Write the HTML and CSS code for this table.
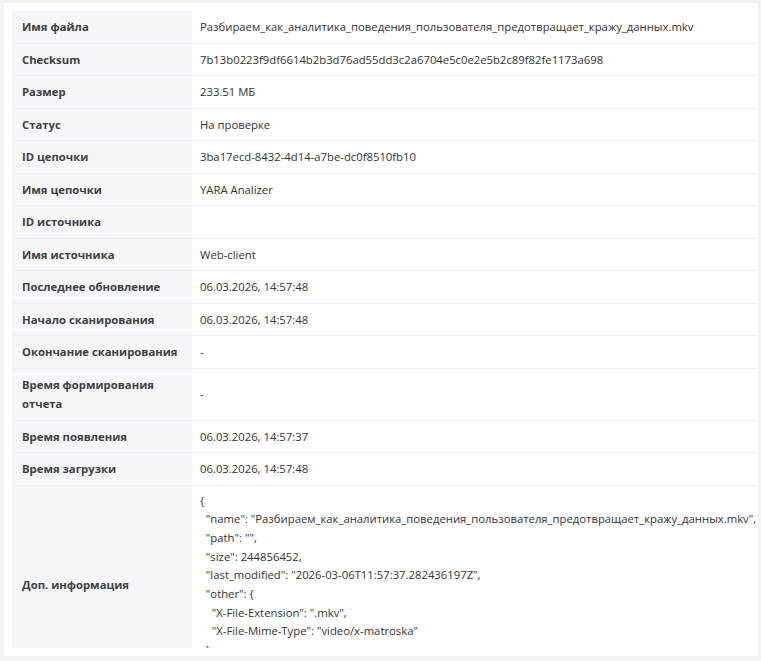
FILE: index.html
```html
<!DOCTYPE html>
<html lang="ru">

<head>
    <meta charset="UTF-8">
    <meta name="viewport" content="width=device-width, initial-scale=1.0">
    <title>Детали файла</title>
    <link rel="stylesheet" href="styles.css">
</head>

<body>
    <div class="card">
        <div class="scroll">
            <table class="info">
                <tbody>
                    <tr>
                        <th>Имя файла</th>
                        <td>Разбираем_как_аналитика_поведения_пользователя_предотвращает_кражу_данных.mkv</td>
                    </tr>
                    <tr>
                        <th>Checksum</th>
                        <td>7b13b0223f9df6614b2b3d76ad55dd3c2a6704e5c0e2e5b2c89f82fe1173a698</td>
                    </tr>
                    <tr>
                        <th>Размер</th>
                        <td>233.51 МБ</td>
                    </tr>
                    <tr>
                        <th>Статус</th>
                        <td>На проверке</td>
                    </tr>
                    <tr>
                        <th>ID цепочки</th>
                        <td>3ba17ecd-8432-4d14-a7be-dc0f8510fb10</td>
                    </tr>
                    <tr>
                        <th>Имя цепочки</th>
                        <td>YARA Analizer</td>
                    </tr>
                    <tr>
                        <th>ID источника</th>
                        <td></td>
                    </tr>
                    <tr>
                        <th>Имя источника</th>
                        <td>Web-client</td>
                    </tr>
                    <tr>
                        <th>Последнее обновление</th>
                        <td>06.03.2026, 14:57:48</td>
                    </tr>
                    <tr>
                        <th>Начало сканирования</th>
                        <td>06.03.2026, 14:57:48</td>
                    </tr>
                    <tr>
                        <th>Окончание сканирования</th>
                        <td>-</td>
                    </tr>
                    <tr>
                        <th>Время формирования отчета</th>
                        <td>-</td>
                    </tr>
                    <tr>
                        <th>Время появления</th>
                        <td>06.03.2026, 14:57:37</td>
                    </tr>
                    <tr>
                        <th>Время загрузки</th>
                        <td>06.03.2026, 14:57:48</td>
                    </tr>
                    <tr>
                        <th>Доп. информация</th>
                        <td class="json-cell"><pre class="json">{
  "name": "Разбираем_как_аналитика_поведения_пользователя_предотвращает_кражу_данных.mkv",
  "path": "",
  "size": 244856452,
  "last_modified": "2026-03-06T11:57:37.282436197Z",
  "other": {
    "X-File-Extension": ".mkv",
    "X-File-Mime-Type": "video/x-matroska"
  }
}</pre></td>
                    </tr>
                </tbody>
            </table>
        </div>
    </div>
</body>

</html>
```

FILE: styles.css
```css
html,
body {
    margin: 0;
    padding: 0;
}

body {
    background-color: #f2f2f3;
    font-family: "Open Sans", "Noto Sans", sans-serif;
    font-size: 11.3px;
    color: #333;
}

.card {
    margin: 3px 3px 0 4px;
    padding: 8px 1px 8px 8px;
    background-color: #fff;
}

.scroll {
    height: 637px;
    overflow: hidden;
}

.info {
    width: 100%;
    border-collapse: collapse;
    table-layout: fixed;
}

.info th,
.info td {
    padding: 6px 8px;
    line-height: 19.5px;
    border-bottom: 1px solid #edf0f6;
    text-align: left;
    vertical-align: middle;
}

.info th {
    width: 160px;
    padding-left: 10px;
    padding-right: 10px;
    background-color: #f5f7fb;
    color: #404040;
    font-weight: 700;
}

.info td {
    white-space: nowrap;
    overflow: hidden;
}

.json-cell {
    padding-top: 7px;
    padding-right: 0;
}

.json {
    margin: 0;
    font-family: "Open Sans", "Noto Sans", sans-serif;
    font-size: 11.3px;
    line-height: 18.7px;
    white-space: pre;
    color: #333;
}
```
